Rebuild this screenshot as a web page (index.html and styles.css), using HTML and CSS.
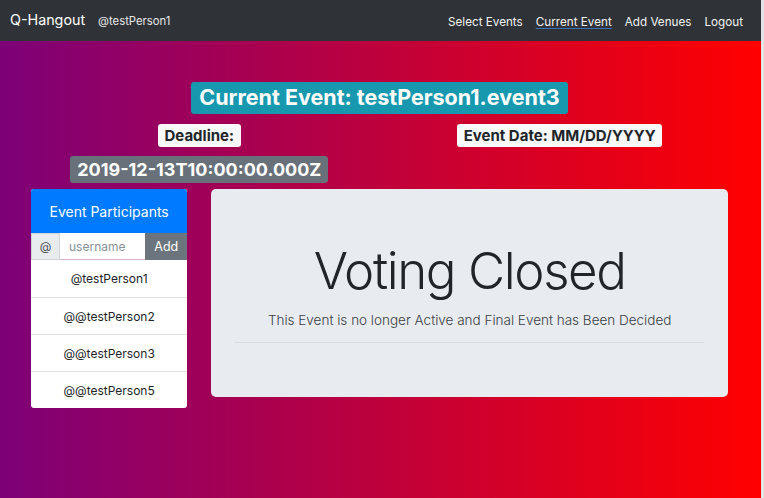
FILE: index.html
```html
<!DOCTYPE html>
<html lang="en">
<head>
<meta charset="utf-8">
<title>Q-Hangout</title>
<link rel="stylesheet" href="styles.css">
</head>
<body>
<div class="page">
  <nav class="navbar">
    <div class="brand-group">
      <span class="brand">Q-Hangout</span>
      <span class="user">@testPerson1</span>
    </div>
    <ul class="nav-links">
      <li><a class="nav-link">Select Events</a></li>
      <li><a class="nav-link active">Current Event</a></li>
      <li><a class="nav-link">Add Venues</a></li>
      <li><a class="nav-link">Logout</a></li>
    </ul>
  </nav>
  <main class="container">
    <div class="title-row">
      <span class="badge badge-info title">Current Event: testPerson1.event3</span>
    </div>
    <div class="row date-row">
      <div class="col center"><span class="badge badge-light small">Deadline:</span></div>
      <div class="col center"><span class="badge badge-light small">Event Date: MM/DD/YYYY</span></div>
    </div>
    <div class="row stamp-row">
      <div class="col center"><span class="badge badge-secondary stamp">2019-12-13T10:00:00.000Z</span></div>
      <div class="col"></div>
    </div>
    <div class="row main-row">
      <div class="col-3">
        <div class="card">
          <div class="card-header">Event Participants</div>
          <div class="input-group">
            <span class="prepend">@</span>
            <span class="input">username</span>
            <span class="btn-add">Add</span>
          </div>
          <ul class="list">
            <li>@testPerson1</li>
            <li>@@testPerson2</li>
            <li>@@testPerson3</li>
            <li>@@testPerson5</li>
          </ul>
        </div>
      </div>
      <div class="col-9">
        <div class="jumbotron">
          <h1 class="display">Voting Closed</h1>
          <p class="lead">This Event is no longer Active and Final Event has Been Decided</p>
          <hr class="rule">
        </div>
      </div>
    </div>
  </main>
</div>
</body>
</html>
```

FILE: styles.css
```css
html, body {
  margin: 0;
  padding: 0;
}
body {
  background: #e4e4e4;
  font-family: Inter, "Noto Sans", "Liberation Sans", sans-serif;
  color: #212529;
}
.page {
  width: 761px;
  min-height: 498px;
  background: linear-gradient(to right, #7d0078 0%, #ff0000 100%);
}
.navbar {
  height: 41px;
  background: #2f3337;
  display: flex;
  align-items: center;
  justify-content: space-between;
  padding: 0 18px 2px 10px;
  box-sizing: border-box;
}
.brand-group {
  display: flex;
  align-items: baseline;
  gap: 13px;
}
.brand {
  color: #fff;
  font-size: 14.3px;
}
.user {
  color: #e8e8e8;
  font-size: 11.3px;
}
.nav-links {
  list-style: none;
  margin: 0;
  padding: 0;
  display: flex;
  gap: 13px;
}
.nav-link {
  color: #f2f2f2;
  font-size: 11.7px;
}
.nav-link.active {
  text-decoration: underline;
  text-decoration-color: #3d6fb8;
  text-underline-offset: 2px;
}
.container {
  margin-left: 19px;
  width: 721px;
  padding-top: 41px;
}
.title-row {
  display: flex;
  justify-content: center;
}
.badge {
  display: inline-block;
  font-weight: 700;
  line-height: 1;
  border-radius: 3px;
  white-space: nowrap;
}
.badge-info {
  background: #1798ae;
  color: #fff;
}
.badge-light {
  background: #f8f9fa;
  color: #212529;
}
.badge-secondary {
  background: #68707a;
  color: #fff;
}
.title {
  font-size: 21.5px;
  padding: 5.25px 8.5px;
}
.row {
  display: flex;
}
.col {
  flex: 1 1 0;
}
.center {
  display: flex;
  justify-content: center;
}
.date-row {
  margin-top: 10px;
}
.small {
  font-size: 15px;
  padding: 4px 6.5px;
}
.stamp-row {
  margin-top: 9px;
}
.stamp {
  font-size: 18px;
  padding: 4.5px 7px;
}
.main-row {
  margin-top: 6px;
  align-items: flex-start;
}
.col-3 {
  width: 25%;
  padding: 0 12px;
  box-sizing: border-box;
}
.col-9 {
  width: 75%;
  padding: 0 12px;
  box-sizing: border-box;
}
.card {
  background: #fff;
  border-radius: 3px;
  overflow: hidden;
}
.card-header {
  height: 44px;
  background: #007bff;
  color: #fff;
  font-size: 14px;
  display: flex;
  align-items: center;
  justify-content: center;
}
.input-group {
  display: flex;
  height: 27px;
  font-size: 12px;
}
.prepend {
  width: 29px;
  background: #e9ecef;
  color: #495057;
  border: 1px solid #ced4da;
  box-sizing: border-box;
  display: flex;
  align-items: center;
  justify-content: center;
}
.input {
  flex: 1;
  background: #fff;
  color: #8a9097;
  border-bottom: 1px solid #d8b8cf;
  box-sizing: border-box;
  display: flex;
  align-items: center;
  padding-left: 9px;
}
.btn-add {
  width: 42px;
  background: #6c757d;
  color: #fff;
  display: flex;
  align-items: center;
  justify-content: center;
  font-size: 12.5px;
}
.list {
  list-style: none;
  margin: 0;
  padding: 0;
}
.list li {
  height: 37px;
  display: flex;
  align-items: center;
  justify-content: center;
  font-size: 12px;
  border-top: 1px solid #e2e2e2;
  box-sizing: border-box;
}
.list li:first-child {
  border-top: none;
}
.jumbotron {
  background: #e8ebef;
  border-radius: 5px;
  height: 208px;
  padding: 51px 24px 0;
  box-sizing: border-box;
  text-align: center;
}
.display {
  margin: 0;
  font-size: 51px;
  font-weight: 300;
  line-height: 1.2;
  letter-spacing: -1.4px;
}
.lead {
  margin: 11px 0 0;
  font-size: 13.5px;
  font-weight: 300;
  color: #3a4047;
}
.rule {
  margin: 14px 0 0;
  border: 0;
  border-top: 1px solid #d8dbdf;
}
```
